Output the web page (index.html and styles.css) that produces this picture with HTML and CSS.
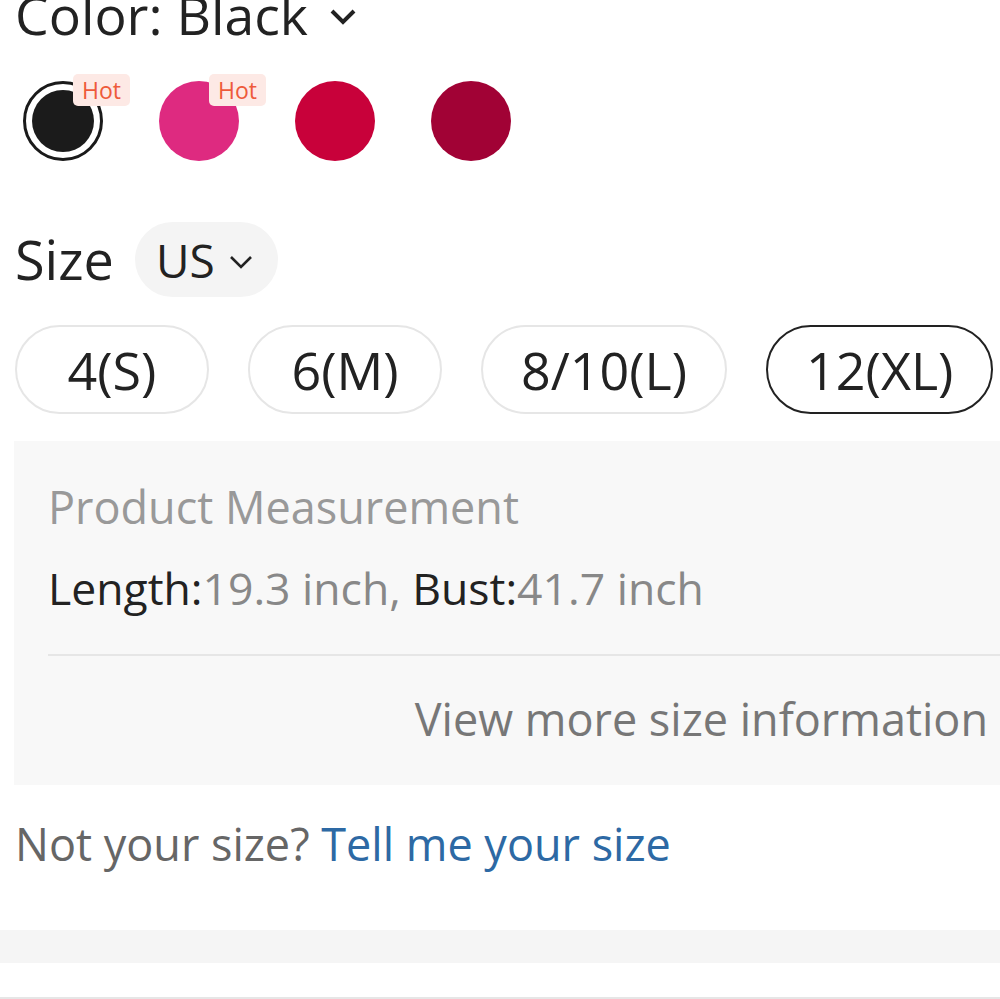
FILE: index.html
```html
<!DOCTYPE html>
<html lang="en">
<head>
    <meta charset="UTF-8">
    <meta name="viewport" content="width=device-width, initial-scale=1.0">
    <title>Product options</title>
    <link rel="stylesheet" href="styles.css">
</head>
<body>

    <div class="page">

        <div class="color-title">
            <span>Color: Black</span>
            <svg class="chevron-big" width="30" height="20" viewBox="0 0 30 20">
                <path d="M4 4 L15 15 L26 4" fill="none" stroke="#222" stroke-width="4"/>
            </svg>
        </div>

        <div class="swatches">
            <div class="swatch selected">
                <span class="dot black"></span>
                <span class="hot">Hot</span>
            </div>
            <div class="swatch">
                <span class="dot pink"></span>
                <span class="hot">Hot</span>
            </div>
            <div class="swatch">
                <span class="dot red"></span>
            </div>
            <div class="swatch">
                <span class="dot wine"></span>
            </div>
        </div>

        <div class="size-head">
            <span class="size-label">Size</span>
            <div class="unit-pill">
                <span>US</span>
                <svg width="26" height="16" viewBox="0 0 26 16">
                    <path d="M3 3 L13 13 L23 3" fill="none" stroke="#222" stroke-width="2.6"/>
                </svg>
            </div>
        </div>

        <div class="sizes">
            <div class="size-btn">4(S)</div>
            <div class="size-btn">6(M)</div>
            <div class="size-btn">8/10(L)</div>
            <div class="size-btn active">12(XL)</div>
        </div>

        <div class="measure">
            <div class="measure-title">Product Measurement</div>
            <div class="measure-values">
                <b>Length:</b>19.3 inch, <b>Bust:</b>41.7 inch
            </div>
            <div class="divider"></div>
            <div class="more">View more size information</div>
        </div>

        <p class="not-size">Not your size? <a href="#">Tell me your size</a></p>

    </div>

    <div class="gap-bar"></div>

</body>
</html>
```

FILE: styles.css
```css
body {
    margin: 0;
    font-family: "Open Sans", Arial, sans-serif;
    color: #222;
    background: #fff;
    overflow: hidden;
    height: 999px;
}
.page {
    padding-left: 15px;
}
.color-title {
    margin-top: -15px;
    height: 60px;
    line-height: 60px;
    font-size: 53.5px;
    display: flex;
    align-items: center;
}
.chevron-big {
    margin-left: 20px;
    margin-top: 4px;
}
.swatches {
    display: flex;
    gap: 56px;
    margin-top: 36px;
    padding-left: 8px;
}
.swatch {
    position: relative;
    width: 80px;
    height: 80px;
}
.dot {
    display: block;
    width: 80px;
    height: 80px;
    border-radius: 50%;
    box-sizing: border-box;
}
.selected .dot {
    border: 3px solid #1a1a1a;
    padding: 6px;
    background-clip: content-box;
}
.black { background-color: #1b1b1b; }
.pink { background-color: #de2a80; }
.red { background-color: #c8013a; }
.wine { background-color: #a10235; }
.hot {
    position: absolute;
    left: 50px;
    top: -7px;
    width: 57px;
    height: 32px;
    line-height: 32px;
    text-align: center;
    font-size: 23px;
    font-weight: 500;
    color: #ee5a3b;
    background-color: #fde9e5;
    border-radius: 5px;
}
.size-head {
    display: flex;
    align-items: center;
    margin-top: 61px;
    height: 75px;
}
.size-label {
    font-size: 54px;
    line-height: 75px;
    margin-right: 21px;
}
.unit-pill {
    display: flex;
    align-items: center;
    height: 75px;
    padding: 0 24px 0 21px;
    background-color: #f4f4f4;
    border-radius: 38px;
    font-size: 46px;
}
.unit-pill svg {
    margin-left: 13px;
    margin-top: 4px;
}
.sizes {
    display: flex;
    gap: 39px;
    margin-top: 28px;
}
.size-btn {
    min-width: 194px;
    height: 89px;
    box-sizing: border-box;
    padding: 0 38px;
    border: 2px solid #e6e6e6;
    border-radius: 45px;
    display: flex;
    align-items: center;
    justify-content: center;
    font-size: 52px;
    color: #222;
}
.size-btn.active {
    border: 2.5px solid #222;
}
.measure {
    margin-top: 27px;
    margin-left: -1px;
    margin-right: -40px;
    padding: 36px 52px 36px 34px;
    background-color: #f8f8f8;
    font-size: 45px;
    line-height: 60px;
}
.measure-title {
    color: #999;
}
.measure-values {
    margin-top: 21px;
    font-size: 44.5px;
    color: #888;
}
.measure-values b {
    font-weight: normal;
    color: #222;
}
.divider {
    height: 2px;
    margin-top: 36px;
    margin-right: -52px;
    background-color: #e6e6e6;
}
.more {
    margin-top: 33px;
    text-align: right;
    color: #777;
    font-size: 45px;
}
.not-size {
    margin: 29px 0 0 0;
    font-size: 45px;
    line-height: 60px;
    color: #666;
}
.not-size a {
    color: #2d69a4;
    text-decoration: none;
}
.gap-bar {
    margin-top: 56px;
    height: 33px;
    background-color: #f5f5f5;
    border-bottom: 34px solid #fff;
    box-shadow: 0 36px 0 0 #e6e6e6;
}
```
